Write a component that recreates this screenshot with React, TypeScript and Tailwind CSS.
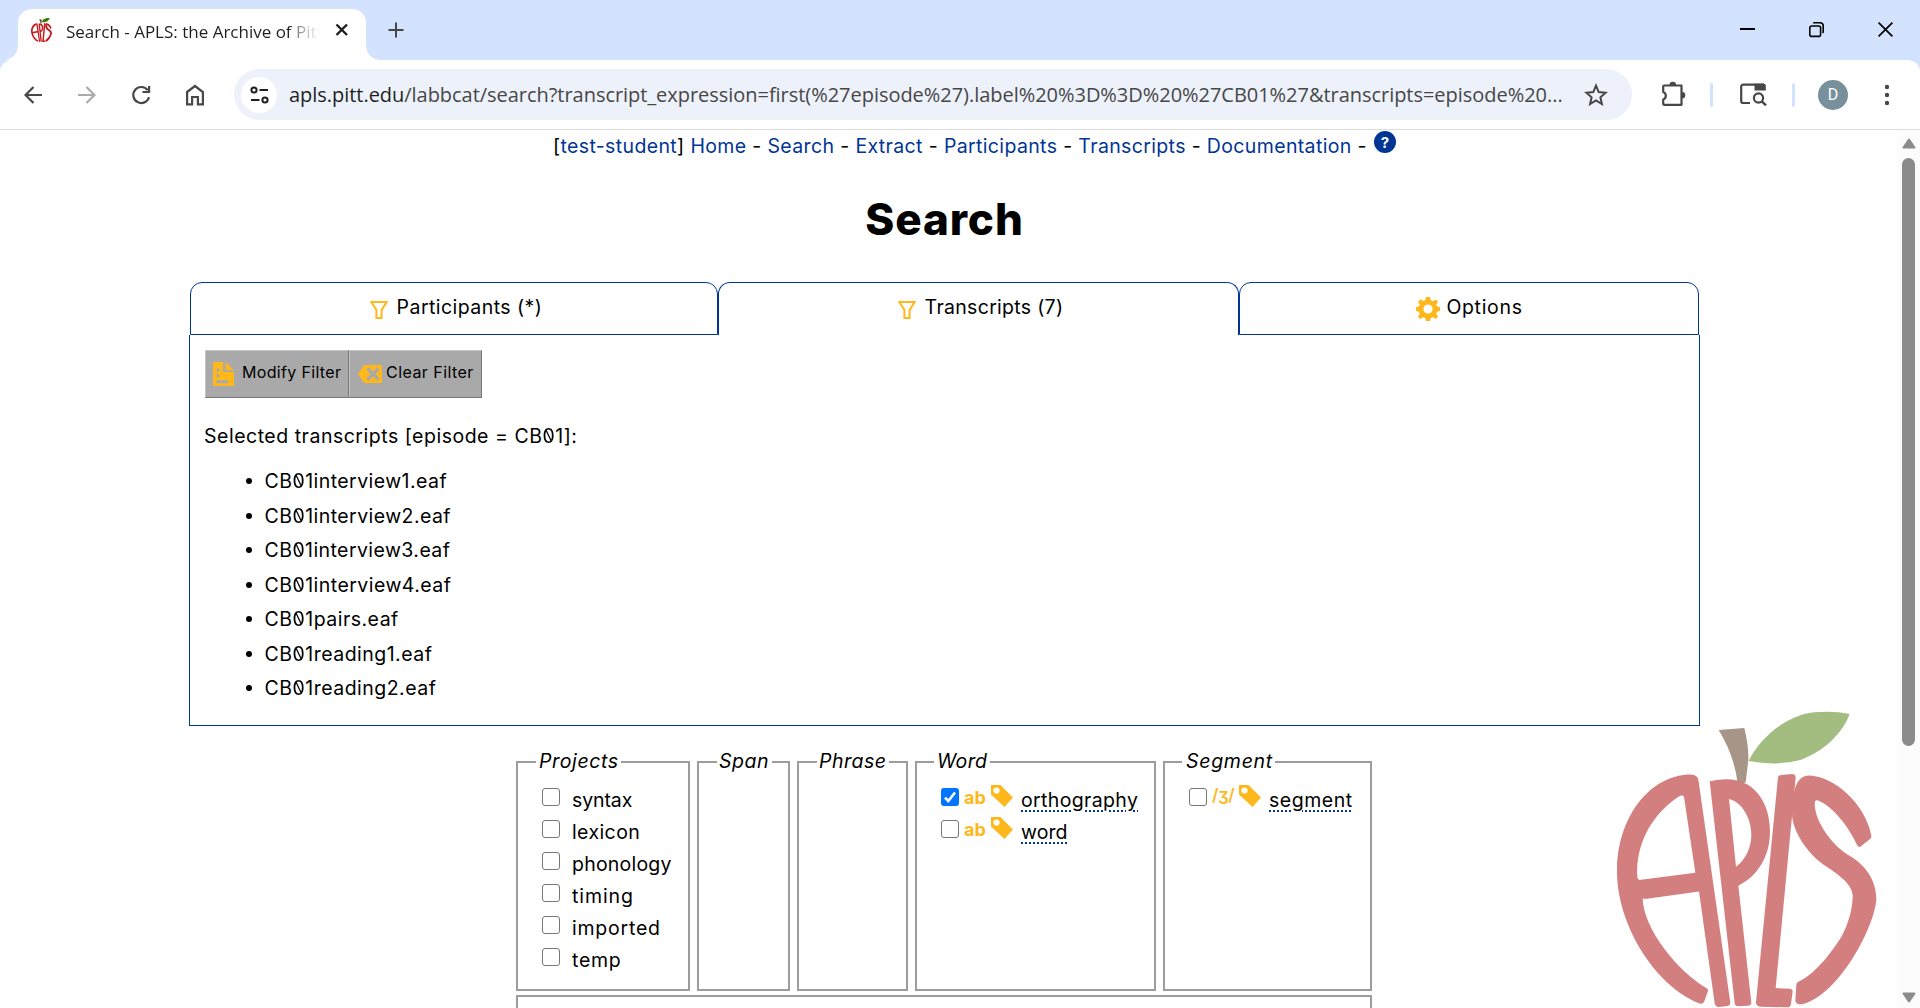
import React from "react";

const Logo = ({ className, red, stem, leaf }: { className: string; red: string; stem: string; leaf: string }) => (
  <svg viewBox="50 62 780 892" preserveAspectRatio="none" className={className}>
    <path fill={stem} d="M355 119L432 113C441 150 445 180 444 210L436 276Q424 282 411 276C406 225 384 165 355 119Z" />
    <path fill={leaf} d="M445 212C480 140 560 75 640 66Q700 60 748 71C730 120 680 180 600 209Q530 228 445 212Z" />
    <g fill={red} fillRule="evenodd">
      <path d="M272 253Q291 254 294 268L390 938Q390 948 376 949L356 951Q345 951 343 940L296 604L146 625Q133 627 127 625C130 720 235 845 318 894Q325 898 323 903L312 934Q307 945 296 940C160 885 50 700 50 545C50 380 150 253 272 253ZM251 320C247 313 241 315 233 320C160 370 105 455 111 560Q112 571 122 569L285 548Z" />
      <path d="M328 273C375 262 412 266 440 282C480 305 509 355 509 425C509 500 470 560 414 587L453 938Q453 947 441 947L414 949Q404 949 403 940ZM386 326L407 530C435 508 453 475 453 432C453 385 425 335 386 326Z" />
      <path d="M533 261Q534 255 542 254L575 251Q586 251 586 262L526 894L568 896Q577 897 577 905L572 941Q571 953 558 952L480 950Q466 948 467 936Z" />
      <path d="M627 256C700 258 795 340 813 436Q814 443 808 447L781 469Q775 473 771 466C745 410 700 350 652 330Q643 328 643 340C643 390 690 460 740 492C795 522 828 570 828 627C826 700 720 915 606 943Q586 944 585 932L588 884Q588 878 594 875C650 850 700 775 722 742C745 700 757 655 757 615C755 580 710 550 672 525C620 490 575 420 575 370C576 330 578 256 627 256Z" />
    </g>
  </svg>
);

const Funnel = ({ className }: { className: string }) => (
  <svg width="18" height="18" viewBox="0 0 18 18" className={className}>
    <path d="M1.4 1h15.2L11.6 9v8H6.4V9z" fill="none" stroke="#ffb81c" strokeWidth="2" />
  </svg>
);

const Gear = () => (
  <svg width="24" height="24" viewBox="0 0 24 24" className="mt-[2px]">
    <path
      fill="#ffb81c"
      fillRule="evenodd"
      d="M10 0h4l.8 3.3 2.1.9L19.8 2.4l2.3 2.4-1.8 2.8.8 2L24 10v4l-2.9.7-.8 2 1.8 2.9-2.4 2.5-2.9-1.8-2 .8L14 24h-4l-.8-2.9-2-.8-2.9 1.8-2.4-2.4 1.8-2.9-.8-2.1L0 14v-4l2.9-.5.8-2L2 4.700 4.400 2.300l2.800 1.800 2-.8zM12 7.400a4.600 4.600 0 1 0 0 9.200 4.600 4.600 0 0 0 0-9.200z"
    />
  </svg>
);

const Tag = () => (
  <svg width="22" height="22" viewBox="0 0 22 22" className="mb-[3px]">
    <path fill="#ffb81c" fillRule="evenodd" d="M0 0h9.500L22 12.500 13.500 22 0 9.500zM5.500 2.400a3.100 3.100 0 1 0 0 6.200 3.100 3.100 0 0 0 0-6.200z" />
  </svg>
);

const Box = ({ checked = false }: { checked?: boolean }) =>
  checked ? (
    <span className="flex size-[18px] shrink-0 items-center justify-center rounded-[3px] bg-[#0075ff]">
      <svg width="18" height="18" viewBox="0 0 18 18">
        <path d="M4 9.600l3.300 3.400L14 4.500" fill="none" stroke="#fff" strokeWidth="2.600" />
      </svg>
    </span>
  ) : (
    <span className="size-[18px] shrink-0 rounded-[3px] border border-[#767676] bg-white" />
  );

const Zero = () => <span className="inline-block -scale-x-100 [font-feature-settings:'zero'_1]">0</span>;

const files = [
  { name: "1interview1.eaf", track: "tracking-[0.44px]" },
  { name: "1interview2.eaf", track: "tracking-[0.44px]" },
  { name: "1interview3.eaf", track: "tracking-[0.42px]" },
  { name: "1interview4.eaf", track: "tracking-[0.46px]" },
  { name: "1pairs.eaf", track: "tracking-[0.48px]" },
  { name: "1reading1.eaf", track: "tracking-[0.48px]" },
  { name: "1reading2.eaf", track: "tracking-[0.48px]" },
];

const projects = [
  { name: "syntax", track: "tracking-[-0.1px]" },
  { name: "lexicon", track: "tracking-[0.4px]" },
  { name: "phonology", track: "tracking-[0.22px]" },
  { name: "timing", track: "tracking-[0.9px]" },
  { name: "imported", track: "tracking-[0.78px]" },
  { name: "temp", track: "tracking-[0.7px]" },
];

const Panel = ({ title, width, legend, children }: { title: string; width: string; legend: string; children?: React.ReactNode }) => (
  <fieldset className={"h-[241px] shrink-0 border-2 border-[#9c9c9c] " + width}>
    <legend className={"h-6 pb-px leading-[23px] italic whitespace-nowrap " + legend}>{title}</legend>
    {children}
  </fieldset>
);

const Layer = ({ mark, name, checked, track, markStyle }: { mark: string; name: string; checked?: boolean; track: string; markStyle: string }) => (
  <div className="flex h-8 items-center">
    <Box checked={checked} />
    <span className={"ml-[5px] w-[27px] " + markStyle}>{mark}</span>
    <Tag />
    <span className={"ml-[8px] pt-[8px] whitespace-nowrap underline decoration-[#003594] decoration-dotted decoration-2 underline-offset-[3px] " + track}>{name}</span>
  </div>
);

const Link = ({ children }: { children: string }) => <a className="text-[#003594]">{children}</a>;

export default function App() {
  return (
    <div className="relative flex h-[1008px] w-[1920px] flex-col overflow-hidden bg-[#d3e3fd] font-['Inter',sans-serif] text-[19.500px] text-black">
      {/* tab strip */}
      <div className="flex h-[60px] shrink-0 font-['Open_Sans',sans-serif]">
        <div className="relative mt-[9px] ml-[18px] flex h-[51px] w-[348px] items-center rounded-t-[14px] bg-white">
          <span className="absolute bottom-0 -left-[14px] size-[14px] bg-[radial-gradient(circle_at_0_0,transparent_13.5px,white_14px)]" />
          <span className="absolute -right-[14px] bottom-0 size-[14px] bg-[radial-gradient(circle_at_100%_0,transparent_13.5px,white_14px)]" />
          <Logo className="mb-[9px] ml-[13px] h-[24px] w-[21px]" red="#c01a1e" stem="#5a3a1e" leaf="#3f7d0a" />
          <span className="mb-[6px] ml-[14px] w-[253px] bg-[linear-gradient(90deg,#1f1f1f_88%,#1f1f1f80_92%,transparent_100%)] bg-clip-text text-[17px] whitespace-nowrap text-transparent">
            Search - APLS: the Archive of Pit
          </span>
          <svg width="14" height="14" viewBox="0 0 14 14" className="mb-[9px] ml-[16px]">
            <path d="M1.500 1.500l10.500 10.500M12 1.500L1.500 12" stroke="#1f1f1f" strokeWidth="2.400" />
          </svg>
        </div>
        <svg width="16" height="16" viewBox="0 0 16 16" className="mt-[22px] ml-[22px]">
          <path d="M8 .5v15M.5 8h15" stroke="#474747" strokeWidth="2" />
        </svg>
        <div className="mt-[22px] mr-[27px] ml-auto flex gap-[54px]">
          <svg width="15" height="16" viewBox="0 0 15 16">
            <path d="M0 7h15" stroke="#000" strokeWidth="2" />
          </svg>
          <svg width="15" height="16" viewBox="0 0 15 16" fill="none" stroke="#000" strokeWidth="1.600">
            <rect x=".8" y="4" width="10.800" height="10.400" rx="2" />
            <path d="M4.200 1.300C4.600.9 5 .8 5.600.8H11a3.200 3.200 0 0 1 3.200 3.200v5.400c0 .8-.2 1.200-.6 1.600" />
          </svg>
          <svg width="15" height="16" viewBox="0 0 15 16">
            <path d="M.6.600l13.800 13.800M14.400.600L.6 14.400" stroke="#000" strokeWidth="1.700" />
          </svg>
        </div>
      </div>

      {/* toolbar */}
      <div className="flex h-[70px] shrink-0 items-center rounded-t-[12px] border-b border-[#dcdcdc] bg-white">
        <svg width="18" height="18" viewBox="0 0 18 18" className="ml-[24px]" fill="none" stroke="#474747" strokeWidth="2.200">
          <path d="M18 9H2M9.500 1L1.500 9l8 8" />
        </svg>
        <svg width="18" height="18" viewBox="0 0 18 18" className="ml-[36px]" fill="none" stroke="#ababab" strokeWidth="2.200">
          <path d="M0 9h16M8.500 1l8 8-8 8" />
        </svg>
        <svg width="20" height="20" viewBox="0 0 20 20" className="ml-[35px]" fill="none" stroke="#474747" strokeWidth="2.200">
          <path d="M16.700 5.200A8 8 0 1 0 18 12.200M18.100 1v6h-6.600" />
        </svg>
        <svg width="20" height="22" viewBox="0 0 20 22" className="ml-[34px]" fill="none" stroke="#474747" strokeWidth="2.200">
          <path d="M2.100 8L10 2l7.900 6v12.400h-5V13H7.100v7.400h-5z" />
        </svg>
        <div className="ml-[29px] flex h-[51px] w-[1398px] shrink-0 items-center rounded-full bg-[#ecf1fa] font-['Open_Sans',sans-serif]">
          <span className="ml-[7px] flex size-[36px] items-center justify-center rounded-full bg-white">
            <svg width="19" height="18" viewBox="0 0 19 18" fill="none" stroke="#1f1f1f" strokeWidth="2">
              <circle cx="4" cy="4" r="2.600" />
              <path d="M9.500 4h8.500M1 14h8.500" />
              <circle cx="15" cy="14" r="2.600" />
            </svg>
          </span>
          <span className="ml-[12px] w-[1278px] text-[20px] tracking-[-0.035px] whitespace-nowrap text-[#474747]">
            <span className="text-[#1f1f1f]">apls.pitt.edu</span>
            /labbcat/search?transcript_expression=first(%27episode%27).label%20%3D%3D%20%27CB01%27&amp;transcripts=episode%20...
          </span>
          <svg width="24" height="23" viewBox="0 0 24 23" className="ml-[17px]">
            <path d="M12 2.600l2.700 6.500 6.900.6-5.200 4.600 1.500 6.700L12 17.400 6.100 21l1.500-6.700L2.400 9.700l6.900-.6z" fill="none" stroke="#474747" strokeWidth="2" />
          </svg>
        </div>
        <svg width="26" height="26" viewBox="0 0 26 26" className="mb-px ml-[29px]">
          <path d="M4 4.500h16.500v19.300H3.200a1 1 0 0 1-1-1v-4.300a4 4 0 0 0 0-7.500V5.500a1 1 0 0 1 1-1z" fill="none" stroke="#474747" strokeWidth="2.200" strokeLinejoin="round" />
          <path d="M8.500 4a3.300 3.300 0 0 1 6.600 0zM21 11a3.300 3.300 0 0 1 0 6.600z" fill="#474747" />
        </svg>
        <span className="ml-[23px] h-[24px] w-[3px] rounded-full bg-[#d3e3fd]" />
        <svg width="27" height="24" viewBox="0 0 27 24" className="ml-[27px]" fill="none" stroke="#474747">
          <path d="M10 20H3.200a2 2 0 0 1-2-2V3.700a2 2 0 0 1 2-2H24" strokeWidth="2.200" />
          <path d="M14.500.800H24a1.800 1.800 0 0 1 1.800 1.800V7.600H14.500z" fill="#474747" stroke="none" />
          <circle cx="18.500" cy="15" r="4.600" strokeWidth="2.200" />
          <path d="M21.800 18.300l4.200 4" strokeWidth="2.400" />
        </svg>
        <span className="ml-[25px] h-[24px] w-[3px] rounded-full bg-[#d3e3fd]" />
        <span className="ml-[23px] flex size-[30px] items-center justify-center rounded-full bg-[#78909c] font-['Roboto',sans-serif] text-[16px] text-white">D</span>
        <svg width="6" height="22" viewBox="0 0 6 22" className="ml-[36px]" fill="#474747">
          <circle cx="3" cy="3" r="2.200" />
          <circle cx="3" cy="11" r="2.200" />
          <circle cx="3" cy="19" r="2.200" />
        </svg>
      </div>

      {/* page */}
      <div className="flex min-h-0 grow bg-white">
        <main className="w-[1897px] shrink-0">
          <nav className="mt-[4px] ml-[553px] flex h-6 items-start leading-6 tracking-[0.36px] whitespace-pre">
            <span>
              [<Link>test-student</Link>] <Link>Home</Link> - <Link>Search</Link> - <Link>Extract</Link> - <Link>Participants</Link> - <Link>Transcripts</Link> - <Link>Documentation</Link> -
            </span>
            <span className="-mt-[3px] ml-[7px] flex size-[22px] items-center justify-center rounded-full bg-[#003594] text-[15px] leading-none font-bold tracking-normal text-white">?</span>
          </nav>
          <h1 className="mt-[36px] ml-[189px] w-[1511px] text-center text-[44px] leading-[50px] font-extrabold tracking-[0.900px]">Search</h1>

          <div className="mt-[38px] ml-[190px] flex h-[53px] w-[1509px]">
            <div className="flex w-[528px] items-center justify-center rounded-t-[12px] border border-[#003594] pb-[1px] pl-[4px] tracking-[0.45px]">
              <Funnel className="mt-[4px] mr-[9px]" />
              Participants (*)
            </div>
            <div className="flex w-[521px] items-center justify-center rounded-t-[12px] border-x border-t border-[#003594] pb-[2px] pl-[4px] tracking-[0.3px]">
              <Funnel className="mt-[4px] mr-[9px]" />
              Transcripts (7)
            </div>
            <div className="flex w-[460px] items-center justify-center rounded-t-[12px] border border-[#003594] pb-[1px] pl-[1px] tracking-[0.68px]">
              <Gear />
              <span className="ml-[6px]">Options</span>
            </div>
          </div>

          <section className="ml-[189px] h-[391px] w-[1511px] border-x border-b border-[#003594] pt-[15px] pl-[15px]">
            <div className="flex h-[48px] text-[16px] text-black">
              <div className="flex w-[144px] items-center border border-t-[#c4c4c4] border-r-[#777] border-b-[#777] border-l-[#c4c4c4] bg-[#a9a9a9] tracking-[0.33px]">
                <svg width="21" height="24" viewBox="0 0 21 24" className="ml-[7px]">
                  <path fill="#ffb81c" fillRule="evenodd" d="M0 0h10v10h11v14H0zM12.500 0L21 8.200h-8.500zM3.500 6.500v3h2.800v-3zM3.500 12.200v3h2.800v-3zM3.500 18.200v3H15v-3z" />
                </svg>
                <span className="ml-[8px] pb-[4px] whitespace-nowrap">Modify Filter</span>
              </div>
              <div className="flex w-[133px] items-center border border-t-[#c4c4c4] border-r-[#777] border-b-[#777] border-l-[#c4c4c4] bg-[#a9a9a9] tracking-[0.45px]">
                <svg width="24" height="18" viewBox="0 0 24 18" className="ml-[8px]">
                  <path fill="#ffb81c" d="M6 0h18v18H6L0 9z" />
                  <path d="M9.500 3.500l11 11M20.500 3.500l-11 11" stroke="#a9a9a9" strokeWidth="3.200" />
                </svg>
                <span className="ml-[4px] pb-[4px] whitespace-nowrap">Clear Filter</span>
              </div>
            </div>
            <p className="mt-[26px] -ml-px leading-6 tracking-[0.51px]">
              Selected transcripts [episode = CB<Zero />1]:
            </p>
            <ul className="mt-[16px]">
              {files.map((f) => (
                <li key={f.name} className="flex h-[34.500px] items-center leading-[34px]">
                  <span className="ml-[41px] size-[6px] rounded-full bg-black" />
                  <span className={"ml-[12.500px] " + f.track}>
                    CB<Zero />
                    {f.name}
                  </span>
                </li>
              ))}
            </ul>
          </section>

          <div className="mt-[24px] ml-[516px] flex gap-[7px]">
            <Panel title="Projects" width="w-[174px]" legend="ml-[18px] w-[85px] pl-[3px] tracking-[0.62px]">
              <div className="pt-[7px] pl-[24px]">
                {projects.map((p) => (
                  <div key={p.name} className="flex h-8 items-center">
                    <Box />
                    <span className={"ml-[12px] pt-[8px] " + p.track}>{p.name}</span>
                  </div>
                ))}
              </div>
            </Panel>
            <Panel title="Span" width="w-[93px]" legend="ml-[18px] w-[55px] pl-[2px] tracking-[0.5px]" />
            <Panel title="Phrase" width="w-[111px]" legend="ml-[18px] w-[72px] pl-[2px] tracking-[0.5px]" />
            <Panel title="Word" width="w-[241px]" legend="ml-[17px] w-[56px] pl-[3px] tracking-[0.35px]">
              <div className="pt-[7px] pl-[24px]">
                <Layer mark="ab" name="orthography" checked track="tracking-[0.36px]" markStyle="font-bold text-[18px] text-[#ffb81c]" />
                <Layer mark="ab" name="word" track="tracking-[0.05px]" markStyle="font-bold text-[18px] text-[#ffb81c]" />
              </div>
            </Panel>
            <Panel title="Segment" width="w-[209px]" legend="ml-[17px] w-[93px] pl-[4px] tracking-[0.72px]">
              <div className="pt-[7px] pl-[24px]">
                <Layer mark="/ʒ/" name="segment" track="tracking-[0.52px]" markStyle="font-semibold text-[17px] tracking-[-0.5px] pb-[3px] text-[#ffb81c]" />
              </div>
            </Panel>
          </div>
          <div className="mt-[4px] ml-[516px] h-[40px] w-[856px] border-2 border-[#9c9c9c]" />
        </main>
        <div className="flex w-[23px] flex-col items-center justify-between bg-[#fcfcfc]">
          <svg width="14" height="11" viewBox="0 0 14 11" className="mt-[8px]">
            <path d="M7 1.500L12.500 9.500H1.500z" fill="#8b8b8b" stroke="#8b8b8b" strokeWidth="2" strokeLinejoin="round" />
          </svg>
          <span className="-mt-[238px] h-[588px] w-[13px] rounded-full bg-[#8b8b8b]" />
          <svg width="14" height="11" viewBox="0 0 14 11" className="mb-[5px]">
            <path d="M7 9.500L12.500 1.500H1.500z" fill="#8b8b8b" stroke="#8b8b8b" strokeWidth="2" strokeLinejoin="round" />
          </svg>
        </div>
      </div>
      <Logo className="absolute right-[43px] bottom-0 h-[297px] w-[260px]" red="#d47f7f" stem="#a79588" leaf="#a3bd81" />
    </div>
  );
}
